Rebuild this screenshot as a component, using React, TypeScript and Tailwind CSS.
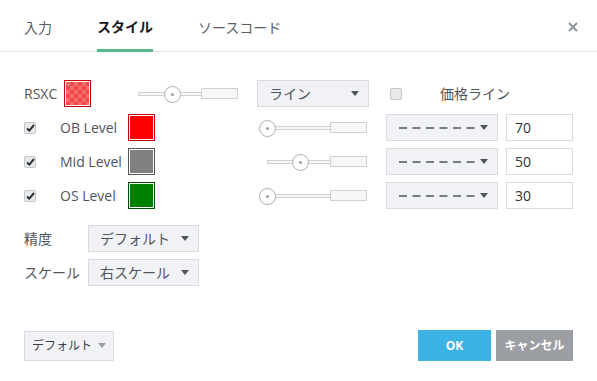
import React from 'react';

const Caret = ({ color = '#50535e' }: { color?: string }) => (
  <svg width="8" height="5" viewBox="0 0 8 5">
    <path d="M0 0 L8 0 L4 5 Z" fill={color} />
  </svg>
);

const Check = ({ checked }: { checked: boolean }) => (
  <div className="w-[12px] h-[12px] rounded-[2px] border border-[#c3c5c9] bg-[#e9eaec] flex items-center justify-center shrink-0">
    {checked && (
      <svg width="9" height="8" viewBox="0 0 9 8">
        <path d="M1 4.5 L3.3 6.6 L8 1" stroke="#2e3138" strokeWidth="2" fill="none" />
      </svg>
    )}
  </div>
);

const Swatch = ({ border, fill }: { border: string; fill: string }) => (
  <div className={`w-[27px] h-[27px] border p-[1px] bg-white shrink-0 ${border}`}>
    <div className={`w-full h-full ${fill}`} />
  </div>
);

const Slider = ({ pos }: { pos: number }) => (
  <div className="relative w-[100px] h-[16px] flex items-center shrink-0">
    <div className="flex-1 h-[4px] border border-r-0 border-[#cdd0d5] bg-[#f7f7f8]" />
    <div className="w-[37px] h-[11px] border border-[#cdd0d5] bg-[#f7f7f8]" />
    <div
      className="absolute top-0 w-[17px] h-[17px] -ml-[8px] rounded-full border border-[#a9adb5] bg-white flex items-center justify-center"
      style={{ left: pos }}
    >
      <div className="w-[3px] h-[3px] rounded-full bg-[#9a9ea6]" />
    </div>
  </div>
);

const Select = ({ children, w }: { children: React.ReactNode; w: string }) => (
  <div className={`h-[27px] ${w} bg-[#f0f2f5] border border-[#d8dbe0] flex items-center justify-between pl-[11px] pr-[9px] shrink-0 text-[#50545e]`}>
    <div className="flex items-center">{children}</div>
    <Caret />
  </div>
);

const Dashes = () => (
  <svg width="76" height="4" viewBox="0 0 76 4" className="ml-[1px]">
    <line x1="0" y1="2" x2="76" y2="2" stroke="#777b84" strokeWidth="2" strokeDasharray="8 5.5" />
  </svg>
);

const levels = [
  { label: 'OB Level', border: 'border-[#c40000]', fill: 'bg-[#ff0000]', pos: 0, value: '70' },
  { label: 'Mid Level', border: 'border-[#555555]', fill: 'bg-[#808080]', pos: 33, value: '50' },
  { label: 'OS Level', border: 'border-[#004d00]', fill: 'bg-[#008000]', pos: 0, value: '30' },
];

export default function App() {
  return (
    <div className="w-[597px] h-[381px] bg-white flex flex-col text-[14px] text-[#50545e] font-['Open_Sans','Noto_Sans_CJK_JP',sans-serif]">
      <div className="h-[52px] border-b border-[#e0e3eb] flex items-stretch px-[24px]">
        <div className="flex items-stretch gap-[45px]">
          <div className="flex items-center pt-[3px] text-[#5a5e68]">入力</div>
          <div className="flex items-center pt-[3px] border-b-[3px] border-[#53b987] -mb-[1px] font-bold text-[#131722]">スタイル</div>
          <div className="flex items-center pt-[3px] text-[#5a5e68]">ソースコード</div>
        </div>
        <div className="ml-auto -mr-[5px] flex items-center pt-[3px]">
          <svg width="10" height="10" viewBox="0 0 10 10">
            <path d="M1 1 L9 9 M9 1 L1 9" stroke="#8f939b" strokeWidth="2" />
          </svg>
        </div>
      </div>

      <div className="flex flex-col pl-[24px] pt-[28px] gap-[7px]">
        <div className="h-[27px] flex items-center">
          <div className="w-[40px]">RSXC</div>
          <Swatch
            border="border-[#cc0000]"
            fill="bg-[repeating-conic-gradient(#f04848_0_25%,#f36a6a_0_50%)] bg-[length:8px_8px]"
          />
          <div className="ml-[47px]">
            <Slider pos={34} />
          </div>
          <div className="ml-[19px]">
            <Select w="w-[112px]">ライン</Select>
          </div>
          <div className="ml-[21px]">
            <Check checked={false} />
          </div>
          <div className="ml-[38px]">価格ライン</div>
        </div>

        {levels.map((l) => (
          <div key={l.label} className="h-[27px] flex items-center">
            <Check checked />
            <div className="ml-[24px] w-[68px]">{l.label}</div>
            <Swatch border={l.border} fill={l.fill} />
            <div className="ml-[112px]">
              <Slider pos={l.pos} />
            </div>
            <div className="ml-[19px]">
              <Select w="w-[112px]">
                <Dashes />
              </Select>
            </div>
            <div className="ml-[8px] w-[67px] h-[27px] border border-[#d8dbe0] bg-white flex items-center pl-[8px] text-[#2e3138]">
              {l.value}
            </div>
          </div>
        ))}

        <div className="h-[27px] flex items-center mt-[9px]">
          <div className="w-[64px]">精度</div>
          <Select w="w-[111px]">デフォルト</Select>
        </div>
        <div className="h-[27px] flex items-center">
          <div className="w-[64px]">スケール</div>
          <Select w="w-[111px]">右スケール</Select>
        </div>
      </div>

      <div className="mt-auto mb-[20px] px-[24px] flex items-center">
        <div className="h-[30px] w-[90px] bg-[#f0f2f5] border border-[#d8dbe0] flex items-center justify-center gap-[6px] text-[12px] text-[#3c3f47]">
          デフォルト
          <Caret color="#9a9da5" />
        </div>
        <div className="ml-auto flex gap-[5px]">
          <div className="h-[31px] w-[73px] bg-[#3bb3e4] text-white font-bold text-[12px] flex items-center justify-center">OK</div>
          <div className="h-[31px] w-[77px] bg-[#9b9ea3] text-white font-bold text-[12px] flex items-center justify-center">キャンセル</div>
        </div>
      </div>
    </div>
  );
}
